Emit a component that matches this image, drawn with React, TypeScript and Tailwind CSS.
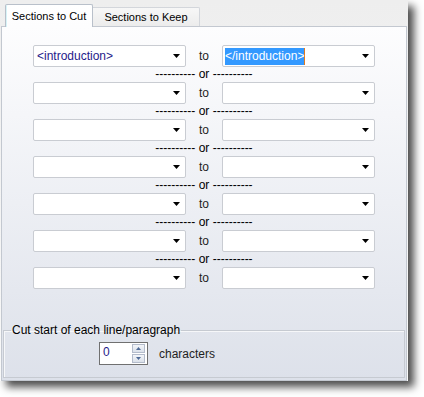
import React from 'react';

const rows = [
  { from: '<introduction>', to: '</introduction>' },
  { from: '', to: '' },
  { from: '', to: '' },
  { from: '', to: '' },
  { from: '', to: '' },
  { from: '', to: '' },
  { from: '', to: '' },
];

const Arrow: React.FC = () => (
  <svg width="7" height="4" viewBox="0 0 7 4" className="shrink-0">
    <path d="M0 0 H7 L3.5 4 Z" fill="#000" />
  </svg>
);

const Combo: React.FC<{ value: string; selected?: boolean }> = ({ value, selected }) => (
  <div className="w-[153px] h-[22px] border border-[#c9ccd2] rounded-[2px] bg-white flex items-center pl-[2px] pr-[5px]">
    <div className="flex-1 flex items-center h-full">
      {value && !selected && <span className="pl-[1px] text-[#1f1a8a] leading-[16px]">{value}</span>}
      {value && selected && (
        <span className="bg-[#3399ff] text-white leading-[17px] border-r border-[#e07a1f]">{value}</span>
      )}
    </div>
    <Arrow />
  </div>
);

const SpinBox: React.FC = () => (
  <div className="w-[49px] h-[23px] border border-[#707070] bg-white flex items-stretch">
    <span className="flex-1 pl-[3px] pt-[1px] text-[#1f1a8a] leading-[16px]">0</span>
    <div className="w-[13px] flex flex-col gap-[1px] py-[1px] mr-[2px]">
      <div className="flex-1 border border-[#b4bccb] bg-gradient-to-b from-[#f3f5f9] to-[#dbe1ea] flex items-center justify-center">
        <svg width="5" height="3" viewBox="0 0 5 3">
          <path d="M0 3 L2.5 0 L5 3 Z" fill="#4f6a96" />
        </svg>
      </div>
      <div className="flex-1 border border-[#b4bccb] bg-gradient-to-b from-[#f3f5f9] to-[#dbe1ea] flex items-center justify-center">
        <svg width="5" height="3" viewBox="0 0 5 3">
          <path d="M0 0 H5 L2.5 3 Z" fill="#4f6a96" />
        </svg>
      </div>
    </div>
  </div>
);

export default function App() {
  return (
    <div className="w-[424px] h-[397px] bg-white font-['Liberation_Sans',Arial,sans-serif] text-[12px] text-[#111]">
      <div className="w-[408px] h-[381px] bg-gradient-to-b from-[#eeeeee] to-[#f9f9f9] shadow-[6px_6px_8px_rgba(0,0,0,0.7)] flex flex-col">
        {/* tabs */}
        <div className="h-[26px] flex items-end pl-[5px] shrink-0">
          <div className="relative z-10 -mb-px w-[88px] h-[23px] border border-b-0 border-[#b9c0ca] rounded-t-[2px] bg-gradient-to-b from-white to-[#fdfdfe] shadow-[inset_1px_0_0_#d6f3f7] flex items-center justify-center text-[11px] text-black">
            Sections to Cut
          </div>
          <div className="w-[107px] h-[19px] border border-l-0 border-b-0 border-[#d3d6db] rounded-tr-[2px] bg-gradient-to-b from-[#f7f7f7] to-[#ececec] flex items-center justify-center text-[11px] text-black">
            Sections to Keep
          </div>
        </div>

        {/* tab page */}
        <div className="flex-1 mx-px border border-[#c3c8d0] bg-gradient-to-b from-[#fdfdfe] to-[#dde1ea] flex flex-col">
          <div className="pt-[18px] flex flex-col items-center">
            {rows.map((r, i) => (
              <React.Fragment key={i}>
                {i > 0 && (
                  <div className="h-[15px] leading-[15px] text-black whitespace-pre">---------- or ----------</div>
                )}
                <div className="h-[22px] flex items-center">
                  <Combo value={r.from} />
                  <span className="w-[36px] text-center text-[#1e1e1e]">to</span>
                  <Combo value={r.to} selected />
                </div>
              </React.Fragment>
            ))}
          </div>

          <fieldset className="mt-auto mx-px mb-[2px] border border-[#c6cad1] shadow-[inset_1px_1px_0_#f6f7f9] pb-[12px]">
            <legend className="ml-[7px] px-px leading-[14px] text-black">Cut start of each line/paragraph</legend>
            <div className="mt-[5px] pl-[95px] flex items-center">
              <SpinBox />
              <span className="ml-[11px] text-[#1e1e1e]">characters</span>
            </div>
          </fieldset>
        </div>
      </div>
    </div>
  );
}
